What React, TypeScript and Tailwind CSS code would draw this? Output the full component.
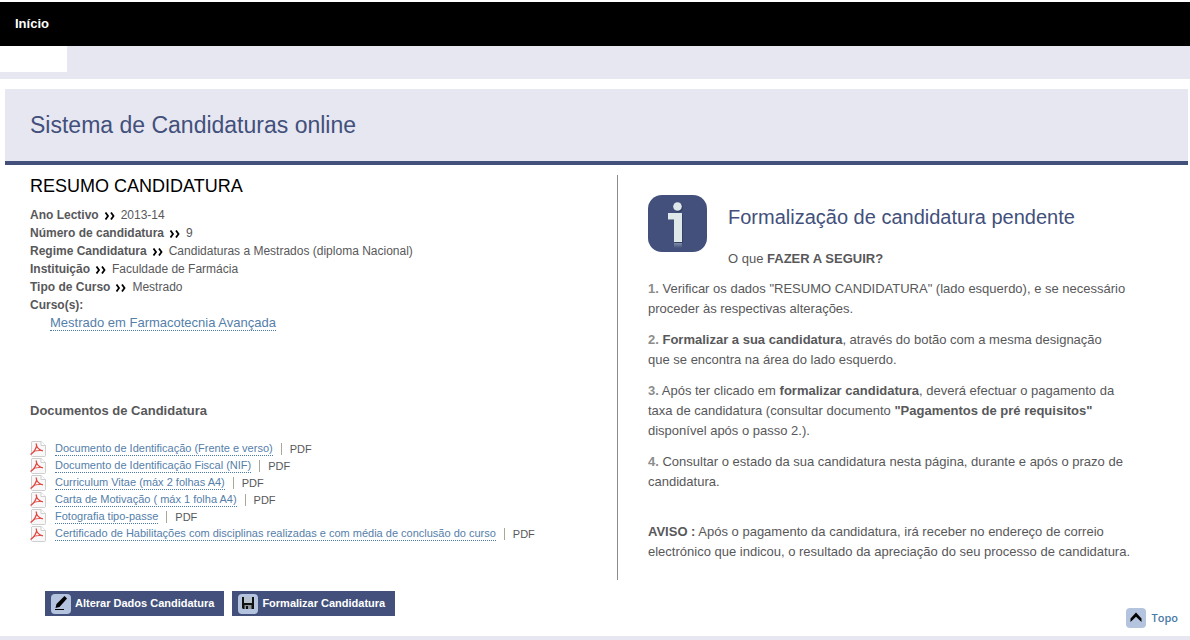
import type { ReactNode } from 'react';

const details = [
  { label: 'Ano Lectivo', value: '2013-14' },
  { label: 'Número de candidatura', value: '9' },
  { label: 'Regime Candidatura', value: 'Candidaturas a Mestrados (diploma Nacional)' },
  { label: 'Instituição', value: 'Faculdade de Farmácia' },
  { label: 'Tipo de Curso', value: 'Mestrado' },
];

const documents = [
  'Documento de Identificação (Frente e verso)',
  'Documento de Identificação Fiscal (NIF)',
  'Curriculum Vitae (máx 2 folhas A4)',
  'Carta de Motivação ( máx 1 folha A4)',
  'Fotografia tipo-passe',
  'Certificado de Habilitações com disciplinas realizadas e com média de conclusão do curso',
];

function DoubleArrow() {
  return (
    <svg className="mx-[5px] inline-block h-2 w-3 align-[-1px]" viewBox="0 0 12 8" fill="none" stroke="#000" strokeWidth="1.8">
      <path d="M1.5 0.5 L4 4 L1.5 7.5 M7 0.5 L9.5 4 L7 7.5" />
    </svg>
  );
}

function PdfIcon() {
  return (
    <svg className="h-4 w-4 shrink-0" viewBox="0 0 16 16" fill="none">
      <path d="M2 0.5 H11 L15.5 4.5 V14.5 Q15.5 15.5 14.5 15.5 H2.5 Q1.5 15.5 1.5 14.5 V1 Z" fill="#f8f8f8" stroke="#cfcfcf" />
      <path d="M11 0.5 V4.5 H15.5" fill="#fff" stroke="#cfcfcf" />
      <path d="M0.5 13.5 C3 12 5.5 8.5 6.5 5.5 M6.2 2.5 C6.2 5.5 8 8.5 12.8 10" stroke="#e0453f" strokeWidth="1.3" />
      <path d="M4 10.3 C6 9.8 9 9.3 12.8 9.5" stroke="#e0453f" strokeWidth="0.9" />
    </svg>
  );
}

function InfoIcon() {
  return (
    <svg className="h-[57px] w-[59px] shrink-0" viewBox="0 0 59 57">
      <defs>
        <linearGradient id="fade" x1="0" y1="0" x2="0" y2="1">
          <stop offset="0" stopColor="#dfe9ea" stopOpacity="0.4" />
          <stop offset="1" stopColor="#dfe9ea" stopOpacity="0" />
        </linearGradient>
      </defs>
      <rect width="59" height="57" rx="14" fill="#42507b" />
      <g fill="#2c3658" opacity="0.6">
        <circle cx="30.5" cy="12.5" r="4.5" />
        <path d="M21 19 H35 V48 H27 V25 H21 Z" />
      </g>
      <g fill="#dfe9ea">
        <circle cx="29.5" cy="11.5" r="4.3" />
        <path d="M20 18 H34 V47 H26 V24.5 H20 Z" />
      </g>
      <rect x="26" y="48" width="8" height="5" fill="url(#fade)" />
    </svg>
  );
}

function PencilIcon() {
  return (
    <svg className="h-5 w-5" viewBox="0 0 20 20">
      <rect width="20" height="20" rx="4" fill="#b4c3de" />
      <path d="M13.5 2 L16 4.5 L8.5 13 L4.5 14 L5.5 10 Z" fill="#000" />
      <path d="M4 15.5 H13" stroke="#000" />
    </svg>
  );
}

function SaveIcon() {
  return (
    <svg className="h-5 w-5" viewBox="0 0 20 20">
      <rect width="20" height="20" rx="4" fill="#b4c3de" />
      <path d="M4 3 H16 V15 H5 L4 14 Z" fill="#111" />
      <rect x="6" y="3" width="8" height="6" fill="#b5c0cc" />
      <rect x="6.5" y="11" width="7" height="4" fill="#8f989f" />
      <rect x="8" y="12" width="2" height="3" fill="#111" />
    </svg>
  );
}

function TopIcon() {
  return (
    <svg className="h-5 w-5" viewBox="0 0 20 20">
      <rect width="20" height="20" rx="4" fill="#b4c3de" />
      <path d="M10 4.5 L15.5 10.5 V14 L10 8.8 L4.5 14 V10.5 Z" fill="#000" />
    </svg>
  );
}

function ActionButton({ icon, children }: { icon: ReactNode; children: ReactNode }) {
  return (
    <button type="button" className="flex h-[25px] items-center gap-1 bg-[#42507b] pr-2.5 pl-1.5 text-[11px] font-bold text-white">
      {icon}
      {children}
    </button>
  );
}

function Step({ number, children }: { number: number; children: ReactNode }) {
  return (
    <p className="mb-[11px]">
      <span className="font-bold text-[#8c8c8c]">{number}.</span> {children}
    </p>
  );
}

export default function App() {
  return (
    <div className="bg-white font-['Liberation_Sans',Arial,sans-serif] text-[13px] text-[#58585a]">
      <nav className="mt-0.5 flex h-11 items-center bg-black px-[15px]">
        <a href="#" className="font-bold text-white">Início</a>
      </nav>
      <div className="h-[33px] bg-[#e7e7f1]">
        <div className="h-[26px] w-[67px] bg-white"></div>
      </div>

      <div className="mt-2.5 mr-0.5 ml-[5px]">
        <header className="border-b-4 border-[#42507b] bg-[#e7e7f1] px-[25px] py-5">
          <h1 className="text-[23px] leading-8 text-[#42507b]">Sistema de Candidaturas online</h1>
        </header>

        <main className="mt-2.5 grid grid-cols-[612fr_571fr]">
          <section className="pl-[25px]">
            <h2 className="text-lg leading-[22px] text-black">RESUMO CANDIDATURA</h2>
            <div className="mt-[9px] text-xs leading-[18px]">
              {details.map((d) => (
                <p key={d.label}>
                  <strong>{d.label}</strong>
                  <DoubleArrow />
                  {d.value}
                </p>
              ))}
              <p className="font-bold">Curso(s):</p>
            </div>
            <p className="pl-5 leading-[18px]">
              <a href="#" className="border-b border-dotted border-[#4a7aa8] text-[#5580aa]">Mestrado em Farmacotecnia Avançada</a>
            </p>

            <h3 className="mt-[69px] font-bold leading-5">Documentos de Candidatura</h3>
            <ul className="mt-[19px] text-[11px]">
              {documents.map((doc) => (
                <li key={doc} className="flex h-[17px] items-center">
                  <PdfIcon />
                  <a href="#" className="ml-[9px] border-b border-dotted border-[#4a7aa8] leading-[13px] text-[#5580aa]">{doc}</a>
                  <span className="ml-2 border-l border-[#a8a894] pl-2 leading-3">PDF</span>
                </li>
              ))}
            </ul>
          </section>

          <section className="border-l border-[#8c8c8c] pt-5 pr-[53px] pb-[18px] pl-[30px] leading-5">
            <div className="flex gap-[21px]">
              <InfoIcon />
              <div>
                <h2 className="mt-2 text-xl leading-7 text-[#42507b]">Formalização de candidatura pendente</h2>
                <p className="mt-[18px] mb-2.5">
                  O que <strong>FAZER A SEGUIR?</strong>
                </p>
              </div>
            </div>
            <Step number={1}>
              Verificar os dados "RESUMO CANDIDATURA" (lado esquerdo), e se necessário proceder às respectivas alterações.
            </Step>
            <Step number={2}>
              <strong>Formalizar a sua candidatura</strong>, através do botão com a mesma designação que&nbsp;se encontra na área do lado esquerdo.
            </Step>
            <Step number={3}>
              Após ter clicado em <strong>formalizar candidatura</strong>, deverá efectuar o pagamento da taxa de candidatura (consultar documento <strong>"Pagamentos de pré requisitos"</strong> disponível após o passo 2.).
            </Step>
            <Step number={4}>
              Consultar o estado da sua candidatura nesta página, durante e após o prazo de candidatura.
            </Step>
            <p className="mt-[30px]">
              <strong>AVISO :</strong> Após o pagamento da candidatura, irá receber no endereço de correio electrónico que indicou, o resultado da apreciação do seu processo de candidatura.
            </p>
          </section>
        </main>

        <div className="mt-[11px] flex items-start justify-between pr-2.5 pl-10">
          <div className="flex gap-2">
            <ActionButton icon={<PencilIcon />}>Alterar Dados Candidatura</ActionButton>
            <ActionButton icon={<SaveIcon />}>Formalizar Candidatura</ActionButton>
          </div>
          <a href="#" className="mt-[17px] flex items-center gap-1.5 font-['Open_Sans',sans-serif] text-[11px] font-semibold leading-5 text-[#4a7aa8]">
            <TopIcon />
            Topo
          </a>
        </div>
      </div>
      <div className="mt-2 h-1 bg-[#e7e7f1]"></div>
    </div>
  );
}
